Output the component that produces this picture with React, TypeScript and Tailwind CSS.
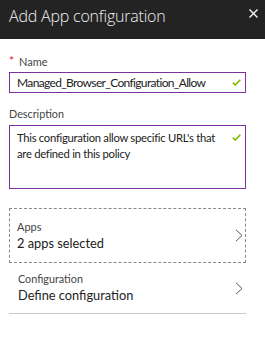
import React from "react";

const Check = () => (
  <svg width="9" height="7" viewBox="0 0 9 7" className="shrink-0">
    <path d="M0.8 3.6 L3.3 6 L8.3 0.8" fill="none" stroke="#7fba00" strokeWidth="1.6" />
  </svg>
);

const Chevron = () => (
  <svg width="8" height="13" viewBox="0 0 8 13" className="shrink-0">
    <path d="M1 0.8 L7 6.5 L1 12.2" fill="none" stroke="#555" strokeWidth="1" />
  </svg>
);

export default function App() {
  return (
    <div
      className="w-[265px] h-[337px] bg-white overflow-hidden"
      style={{ fontFamily: 'Lato, "Open Sans", sans-serif' }}
    >
      <div className="h-[39px] bg-[#232323] flex items-start justify-between pl-[9px] pr-[6px]">
        <div
          className="text-[16px] leading-[20px] mt-[6px] text-[#f0f0f0] font-light tracking-[-0.2px]"
          style={{ fontFamily: '"Open Sans", sans-serif' }}
        >
          Add App configuration
        </div>
        <svg width="9" height="9" viewBox="0 0 9 9" className="mt-[9px] mr-[1px]">
          <path d="M0.5 0.5 L8.5 8.5 M8.5 0.5 L0.5 8.5" stroke="#f5f5f5" strokeWidth="1.4" />
        </svg>
      </div>
      <div className="px-[9px] pr-[19px]">
        <div className="mt-[15px] flex items-start text-[11px] leading-[16px] text-[#444]">
          <span className="text-[#e81123] text-[12px] leading-[12px] mr-[5px] mt-[1px]">*</span>
          <span>Name</span>
        </div>
        <div className="mt-[2px] h-[21px] border border-[#7e2fa0] flex items-center justify-between pl-[7px] pr-[4px]">
          <span className="text-[12px] text-[#222] tracking-[-0.65px]">Managed_Browser_Configuration_Allow</span>
          <Check />
        </div>
        <div className="mt-[13px] text-[10.8px] leading-[16px] text-[#444]">Description</div>
        <div className="mt-[3px] h-[64px] border border-[#7e2fa0] flex items-start justify-between pl-[7px] pr-[4px] pt-[4px]">
          <span className="text-[11.3px] leading-[16px] text-[#222] w-[212px] tracking-[-0.3px]">
            This configuration allow specific URL's that are defined in this policy
          </span>
          <div className="mt-[4px]">
            <Check />
          </div>
        </div>
        <div className="mt-[19px] h-[55px] border border-dashed border-[#888] flex items-center justify-between pl-[7px] pr-[2px]">
          <div className="flex flex-col">
            <span className="text-[11px] leading-[15px] text-[#444]">Apps</span>
            <span className="text-[12.8px] leading-[19px] text-[#222]">2 apps selected</span>
          </div>
          <Chevron />
        </div>
        <div className="h-[51px] border-b border-[#c8c8c8] flex items-center justify-between pl-[9px] pr-[3px]">
          <div className="flex flex-col">
            <span className="text-[10.8px] leading-[15px] text-[#444]">Configuration</span>
            <span className="text-[12.8px] leading-[19px] text-[#222]">Define configuration</span>
          </div>
          <Chevron />
        </div>
      </div>
    </div>
  );
}
